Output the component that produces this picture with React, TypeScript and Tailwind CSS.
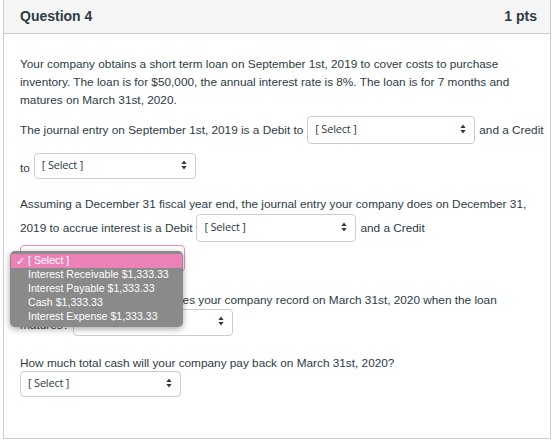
import React from "react";

const OPTIONS = [
  "Interest Receivable $1,333.33",
  "Interest Payable $1,333.33",
  "Cash $1,333.33",
  "Interest Expense $1,333.33",
];

function Arrows() {
  return (
    <svg width="6" height="10" viewBox="0 0 6 10" className="shrink-0">
      <path d="M3 0.5 L5.6 4 L0.4 4 Z" fill="#2d3b45" />
      <path d="M3 9.5 L5.6 6 L0.4 6 Z" fill="#2d3b45" />
    </svg>
  );
}

function Select({ w, h = "h-[27px]", focused = false }: { w: string; h?: string; focused?: boolean }) {
  return (
    <div
      className={`${w} ${h} shrink-0 flex items-center justify-between pl-[7px] pr-[8px] pb-[3px] rounded-[4px] bg-white border ${
        focused ? "border-[#ec8fbd]" : "border-[#c7cdd1]"
      }`}
    >
      <span className="text-[11px] text-[#2d3b45] font-['Open_Sans',sans-serif] tracking-[-0.2px]">[ Select ]</span>
      <Arrows />
    </div>
  );
}

export default function App() {
  return (
    <div className="relative w-[560px] h-[443px] bg-white font-['Liberation_Sans',Arial,sans-serif] text-[#2d3b45]">
      <div className="ml-[3px] w-[548px] h-[439px] flex flex-col border-x border-b border-[#c7cdd1]">
        {/* Header */}
        <div className="h-[34px] shrink-0 flex items-center justify-between pl-[16px] pr-[13px] bg-[#f5f5f5] border-b border-[#c7cdd1]">
          <span className="text-[14px] font-bold">Question 4</span>
          <span className="text-[14px] font-bold">1 pts</span>
        </div>

        {/* Body */}
        <div className="flex-1 pl-[16px] pt-[21px] text-[11.8px] leading-[18px] whitespace-nowrap overflow-hidden">
          <div>Your company obtains a short term loan on September 1st, 2019 to cover costs to purchase</div>
          <div>inventory. The loan is for $50,000, the annual interest rate is 8%. The loan is for 7 months and</div>
          <div>matures on March 31st, 2020.</div>

          <div className="mt-[7px] h-[28px] flex items-center gap-[4px]">
            <span>The journal entry on September 1st, 2019 is a Debit to</span>
            <Select w="w-[168px]" h="h-[28px]" />
            <span>and a Credit</span>
          </div>

          <div className="mt-[9px] h-[26px] flex items-center gap-[4px]">
            <span className="pt-[4px]">to</span>
            <Select w="w-[162px]" h="h-[26px]" />
          </div>

          <div className="mt-[16px]">
            Assuming a December 31 fiscal year end, the journal entry your company does on December 31,
          </div>
          <div className="mt-[1px] h-[28px] flex items-center gap-[4px]">
            <span>2019 to accrue interest is a Debit</span>
            <Select w="w-[160px]" h="h-[28px]" />
            <span>and a Credit</span>
          </div>

          <div className="mt-[3px] h-[27px] flex items-center">
            <Select w="w-[165px]" focused />
          </div>

          <div className="mt-[19px]">
            Which maturity journal entry does your company record on March 31st, 2020 when the loan
          </div>
          <div className="h-[27px] flex items-center gap-[4px]">
            <span className="pt-[4px]">matures?</span>
            <Select w="w-[160px]" />
          </div>

          <div className="mt-[19px] h-[16px] leading-[16px]">
            How much total cash will your company pay back on March 31st, 2020?
          </div>
          <div className="h-[26px] flex items-center">
            <Select w="w-[161px]" h="h-[26px]" />
          </div>
        </div>
      </div>

      {/* Open select menu */}
      <div className="absolute left-[10px] top-[251px] w-[173px] h-[76px] pt-[3px] rounded-[5px] bg-[#8a8a8a] shadow-[0_2px_6px_rgba(0,0,0,0.35)] font-['Liberation_Sans',Arial,sans-serif] text-[10.6px] text-white">
        <div className="h-[14px] mx-[1px] flex items-center bg-[#ea82b6]">
          <span className="w-[17px] pl-[5px] text-[11px] leading-none">✓</span>
          <span>[ Select ]</span>
        </div>
        {OPTIONS.map((o) => (
          <div key={o} className="h-[14px] flex items-center pl-[18px]">
            {o}
          </div>
        ))}
      </div>
    </div>
  );
}
